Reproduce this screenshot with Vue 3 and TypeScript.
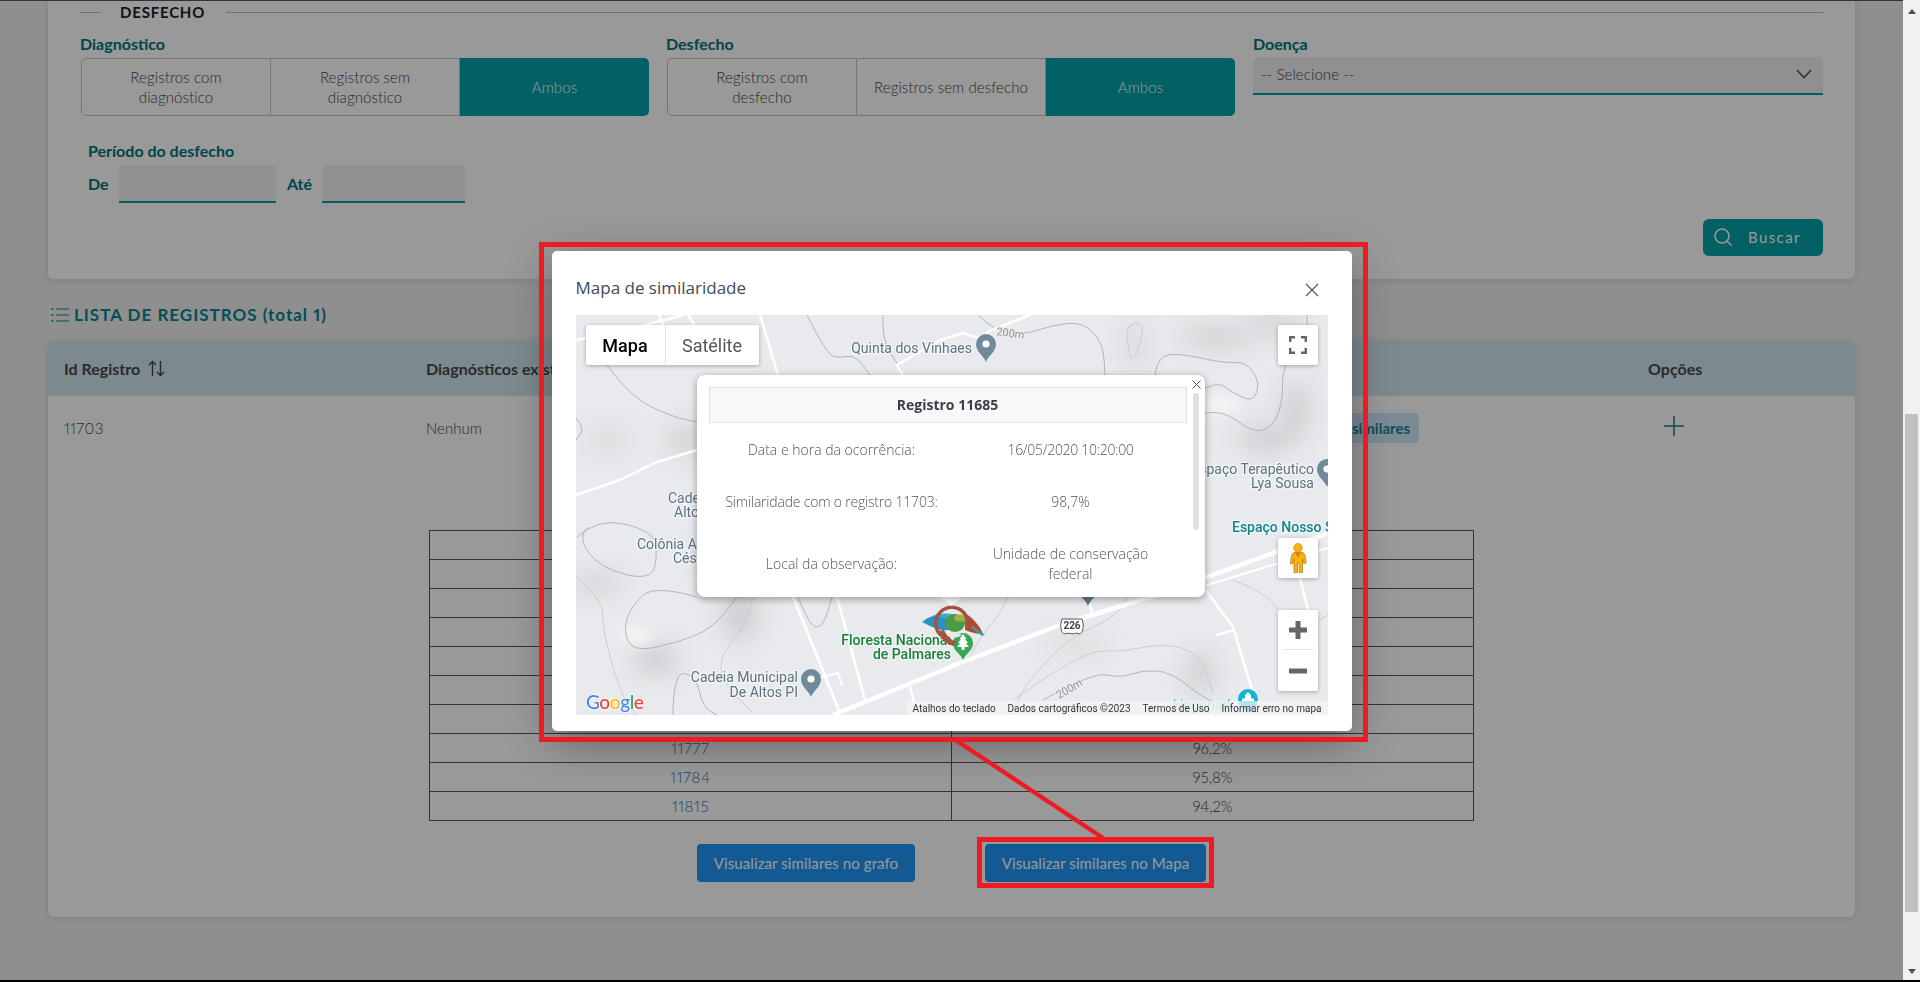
<script setup lang="ts">
type Pt = [number, number]

function smooth(pts: Pt[], closed = false): string {
  const p = closed ? [...pts, pts[0], pts[1]] : pts
  let d = `M${p[0][0]} ${p[0][1]}`
  for (let i = 1; i < p.length - 1; i++) {
    const mx = (p[i][0] + p[i + 1][0]) / 2
    const my = (p[i][1] + p[i + 1][1]) / 2
    d += ` Q${p[i][0]} ${p[i][1]} ${mx} ${my}`
  }
  if (!closed) d += ` L${p[p.length - 1][0]} ${p[p.length - 1][1]}`
  return d
}

const contours: string[] = [
  smooth([[31, 50], [54, 82], [97, 102], [121, 107]]),
  smooth([[0, 103], [9, 113], [0, 125]]),
  smooth([[231, 0], [251, 40], [264, 43], [279, 40], [294, 60]]),
  smooth([[307, 0], [306, 25], [321, 48], [328, 60]]),
  smooth([[402, 0], [417, 15], [447, 20], [477, 10], [507, 7], [527, 28], [529, 60]]),
  smooth([[579, 60], [581, 45], [597, 37], [647, 48], [671, 47], [684, 68], [677, 87], [657, 78], [644, 68], [629, 73]]),
  smooth([[629, 98], [647, 95], [677, 118], [697, 112], [707, 85], [706, 52], [731, 20], [731, 0]]),
  smooth([[1, 222], [22, 203], [74, 215], [82, 235], [76, 266], [24, 253]], true),
  smooth([[121, 282], [79, 270], [56, 290], [47, 315], [57, 337], [101, 328], [137, 313], [161, 282]]),
  smooth([[97, 400], [97, 378], [104, 355], [121, 365], [127, 392], [141, 400]]),
  smooth([[222, 282], [234, 312], [247, 312], [256, 282]]),
  smooth([[467, 385], [517, 357], [544, 363], [567, 355], [594, 357], [621, 378], [637, 387]]),
]
const faintContours: string[] = [
  smooth([[0, 262], [27, 285], [26, 312], [44, 378], [60, 400]]),
  smooth([[177, 282], [171, 308], [141, 345], [151, 372], [177, 398]]),
  smooth([[432, 282], [427, 295], [404, 322], [391, 348]]),
  smooth([[437, 385], [507, 335], [547, 337], [587, 328], [624, 338], [637, 378]]),
  smooth([[657, 265], [694, 280], [704, 302], [735, 310], [752, 300]]),
  smooth([[551, 282], [545, 300], [493, 322], [447, 372], [437, 400]]),
  smooth([[551, 13], [561, 5], [569, 14], [556, 51], [551, 25]], true),
]
const roads: string[] = [
  '0,180 44,165 81,147 121,135',
  '0,25 35,19 107,0',
  '83,0 88,12',
  '112,0 118,9',
  '184,0 202,60',
  '217,282 264,398',
  '261,282 289,385',
  '321,50 364,25 387,18 402,23 416,15 454,0',
  '321,50 327,60',
  '631,277 657,312 677,378',
  '641,320 657,315',
  '724,263 732,295',
  '334,372 341,398',
  '514,290 517,300',
]

const googleLetters = [
  { c: 'G', f: '#4285f4' },
  { c: 'o', f: '#ea4335' },
  { c: 'o', f: '#fbbc05' },
  { c: 'g', f: '#4285f4' },
  { c: 'l', f: '#34a853' },
  { c: 'e', f: '#ea4335' },
]

const similar = [
  ['Id Registro', 'Similaridade'],
  ['11685', '98,7%'],
  ['11692', '98,3%'],
  ['11698', '97,9%'],
  ['11710', '97,6%'],
  ['11726', '97,2%'],
  ['11741', '96,8%'],
  ['11777', '96,2%'],
  ['11784', '95,8%'],
  ['11815', '94,2%'],
]

const infoRows = [
  { k: 'Data e hora da ocorrência:', v: '16/05/2020 10:20:00', cls: 'r1' },
  { k: 'Similaridade com o registro 11703:', v: '98,7%', cls: 'r2' },
  { k: 'Local da observação:', v: 'Unidade de conservação federal', cls: 'r3' },
]
</script>

<template>
  <div class="screen">
    <div class="workspace">
      <div class="page">
        <div class="topline"></div>

        <section class="filter-card">
          <div class="legend"><i></i><span>DESFECHO</span><b></b></div>
          <div class="filter-grid">
            <div>
              <label class="flabel">Diagnóstico</label>
              <div class="segs">
                <button>Registros com diagnóstico</button>
                <button>Registros sem diagnóstico</button>
                <button class="on">Ambos</button>
              </div>
            </div>
            <div>
              <label class="flabel">Desfecho</label>
              <div class="segs">
                <button class="narrow">Registros com desfecho</button>
                <button class="wide">Registros sem desfecho</button>
                <button class="on">Ambos</button>
              </div>
            </div>
            <div class="doenca">
              <label class="flabel">Doença</label>
              <div class="select">
                <span>-- Selecione --</span>
                <svg width="16" height="10" viewBox="0 0 16 10"><path d="M1 1l7 7.5L15 1" fill="none" stroke="#555" stroke-width="1.6" /></svg>
              </div>
            </div>
          </div>
          <div class="period">
            <label class="flabel">Período do desfecho</label>
            <div class="period-row">
              <span class="flabel lb1">De</span>
              <div class="field w1"></div>
              <span class="flabel lb2">Até</span>
              <div class="field w2"></div>
            </div>
          </div>
          <div class="search-row">
            <button class="buscar">
              <svg width="20" height="20" viewBox="0 0 20 20"><circle cx="9" cy="9" r="7" fill="none" stroke="#fff" stroke-width="1.6" /><path d="M14 14l4.5 4.5" stroke="#fff" stroke-width="1.6" /></svg>
              <span>Buscar</span>
            </button>
          </div>
        </section>

        <h2 class="list-title">
          <svg width="18" height="16" viewBox="0 0 18 16">
            <g fill="#008590"><circle cx="1.4" cy="2" r="1.1" /><circle cx="1.4" cy="8" r="1.1" /><circle cx="1.4" cy="14" r="1.1" /></g>
            <path d="M5 2h13M5 8h13M5 14h13" stroke="#008590" stroke-width="1.2" />
          </svg>
          <span>LISTA DE REGISTROS (total 1)</span>
        </h2>

        <section class="list-card">
          <div class="thead">
            <div class="th">
              Id Registro
              <svg class="sort" width="17" height="17" viewBox="0 0 17 17"><path d="M4.500 16V1.500M1 5l3.500-3.500L8 5M12.500 1v14.500M9 12l3.500 3.500L16 12" fill="none" stroke="#474747" stroke-width="1.4" /></svg>
            </div>
            <div class="th">Diagnósticos existentes</div>
            <div class="th"></div>
            <div class="th opt">Opções</div>
          </div>
          <div class="trow">
            <div class="num">11703</div>
            <div>Nenhum</div>
            <div class="pill-cell"><span class="pill">Visualizar similares</span></div>
            <div class="plus-cell">
              <svg width="20" height="20" viewBox="0 0 20 20"><path d="M10 0v20M0 10h20" stroke="#1a7f95" stroke-width="1.6" /></svg>
            </div>
          </div>
          <table class="sim">
            <tbody>
              <tr v-for="(r, i) in similar" :key="i">
                <td><a :class="{ lnk: i > 0 }">{{ r[0] }}</a></td>
                <td>{{ r[1] }}</td>
              </tr>
            </tbody>
          </table>
          <div class="actions">
            <button class="primary a">Visualizar similares no grafo</button>
            <button class="primary b">Visualizar similares no Mapa</button>
          </div>
        </section>

        <div class="backdrop">
          <div class="modal">
            <div class="modal-head">
              <h3>Mapa de similaridade</h3>
              <svg width="14" height="14" viewBox="0 0 14 14"><path d="M1 1l12 12M13 1L1 13" stroke="#555" stroke-width="1.2" /></svg>
            </div>
            <div class="map">
              <svg class="map-canvas" width="752" height="400" viewBox="0 0 752 400">
                <defs>
                  <filter id="blur" x="-80%" y="-80%" width="260%" height="260%"><feGaussianBlur stdDeviation="12" /></filter>
                  <filter id="blur2" x="-50%" y="-50%" width="200%" height="200%"><feGaussianBlur stdDeviation="6" /></filter>
                </defs>
                <rect width="752" height="400" fill="#e9eaed" />
                <g filter="url(#blur)" fill="#c9cbce">
                  <ellipse cx="21" cy="268" rx="24" ry="8" />
                  <ellipse cx="164" cy="300" rx="16" ry="26" />
                  <ellipse cx="80" cy="345" rx="22" ry="14" />
                  <ellipse cx="110" cy="125" rx="18" ry="12" />
                  <ellipse cx="30" cy="125" rx="26" ry="10" opacity=".5" />
                  <ellipse cx="690" cy="124" rx="28" ry="12" />
                  <ellipse cx="720" cy="95" rx="12" ry="28" />
                  <ellipse cx="624" cy="358" rx="12" ry="22" />
                  <ellipse cx="640" cy="22" rx="36" ry="9" />
                  <ellipse cx="700" cy="10" rx="30" ry="8" />
                  <ellipse cx="560" cy="30" rx="10" ry="24" opacity=".6" />
                  <ellipse cx="140" cy="240" rx="10" ry="26" />
                  <ellipse cx="500" cy="330" rx="30" ry="8" opacity=".5" />
                </g>
                <g filter="url(#blur2)" fill="#f2f3f5">
                  <ellipse cx="60" cy="320" rx="18" ry="10" />
                  <ellipse cx="640" cy="90" rx="26" ry="10" />
                </g>
                <path v-for="(d, i) in faintContours" :key="'f' + i" :d="d" class="ctr faint" />
                <path v-for="(d, i) in contours" :key="'c' + i" :d="d" class="ctr" />
                <polyline v-for="(p, i) in roads" :key="'r' + i" :points="p" class="road" />
                <polyline points="246,362 262,358 266,370" class="road thin" />
                <polyline points="257,400 384,348 484,310 587,278 752,218" class="road main" />
                <polyline points="631,270 752,233" class="road thin" />

                <text class="elev" transform="translate(420 20) rotate(8)">200m</text>
                <text class="elev" transform="translate(483 384) rotate(-30)">200m</text>

                <text class="lbl" x="396" y="38" text-anchor="end">Quinta dos Vinhaes</text>
                <text class="lbl" x="92" y="188">Cadeia</text>
                <text class="lbl" x="98" y="202">Altos</text>
                <text class="lbl" x="61" y="234">Colônia Antônio</text>
                <text class="lbl" x="97" y="248">César</text>
                <text class="lbl" x="222" y="367" text-anchor="end">Cadeia Municipal</text>
                <text class="lbl" x="222" y="382" text-anchor="end">De Altos PI</text>
                <text class="lbl" x="738" y="159" text-anchor="end">Espaço Terapêutico</text>
                <text class="lbl" x="738" y="173" text-anchor="end">Lya Sousa</text>
                <text class="lbl teal" x="656" y="217">Espaço Nosso Sonho</text>
                <text class="lbl green" x="375" y="330" text-anchor="end">Floresta Nacional</text>
                <text class="lbl green" x="375" y="344" text-anchor="end">de Palmares</text>
                <text class="lbl pale" x="597" y="395">kingopark</text>

                <g fill="#6f8b99">
                  <path d="M410 47c-2-6-10-10-10-18a10 10 0 0 1 20 0c0 8-8 12-10 18z" />
                  <path d="M235 382c-2-6-10-10-10-18a10 10 0 0 1 20 0c0 8-8 12-10 18z" />
                  <path d="M751 172c-2-6-10-10-10-18a10 10 0 0 1 20 0c0 8-8 12-10 18z" />
                  <path d="M512 291c-2-6-10-10-10-18h20c0 8-8 12-10 18z" fill="#5f7c8a" />
                </g>
                <g fill="#fff"><circle cx="410" cy="29" r="3.600" /><circle cx="235" cy="364" r="3.600" /><circle cx="751" cy="154" r="3.600" /></g>

                <path d="M672 398c-2-3-10-6-10-14a10 10 0 0 1 20 0c0 8-8 11-10 14z" fill="#12b5cb" />
                <path d="M672 377l3 3v3l3 1v2h-12v-2l3-1v-3z" fill="#fff" />

                <path d="M387 345c-2-6-10-9-10-17a10 10 0 0 1 20 0c0 8-8 11-10 17z" fill="#34a853" />
                <path d="M387 319l3.500 5H389l3 4h-2l3 4h-4.500v3h-3v-3H381l3-4h-2l3-4h-1.500z" fill="#fff" />

                <g>
                  <path d="M346 307c8-7 20-9 30-7l4 12c-12 7-22 1-34-5z" fill="#2a93c6" />
                  <path d="M356 301c8-3 16-3 24-1l-4 5c-7-3-13-3-20-4z" fill="#2fb3c2" />
                  <ellipse cx="379" cy="308" rx="10" ry="9" fill="#4c9a45" />
                  <ellipse cx="384" cy="303" rx="6" ry="3.500" fill="#a3b13e" />
                  <path d="M389 298c8 5 15 13 18 21-7 0-13-2-18-4z" fill="#b34a2c" />
                  <path d="M395 312c3 3 7 6 11 9l3-1c-4-2-8-5-12-9z" fill="#2aa7c9" />
                  <path d="M366 321A16 16 0 1 1 391 313" fill="none" stroke="#a5523f" stroke-width="3.500" />
                  <path d="M362 316c3 8 8 13 15 15l4-4c-6-2-10-6-13-12z" fill="#a5523f" />
                  <ellipse cx="378" cy="320" rx="7" ry="2.500" fill="#e8eaed" />
                </g>

                <path d="M486 304h20l1 4c1 5-1 10-3 11-3-1-5-1-7 0-3-1-6-1-9 0-2-1-4-6-3-11z" fill="#fff" stroke="#555" stroke-width="1" />
                <text class="shield" x="496" y="314" text-anchor="middle">226</text>

                <text class="goog" x="10" y="394"><tspan v-for="(l, i) in googleLetters" :key="i" :fill="l.f">{{ l.c }}</tspan></text>
              </svg>

              <div class="types">
                <span class="t on">Mapa</span>
                <span class="t">Satélite</span>
              </div>

              <button class="ctl full">
                <svg width="18" height="18" viewBox="0 0 18 18"><path d="M1.200 6V1.200H6M12 1.200h4.800V6M16.800 12v4.800H12M6 16.800H1.200V12" fill="none" stroke="#666" stroke-width="2.400" /></svg>
              </button>
              <button class="ctl peg">
                <svg width="18" height="30" viewBox="0 0 18 30">
                  <circle cx="9" cy="4.800" r="4.400" fill="#f9b010" stroke="#b98a12" stroke-width=".6" />
                  <path d="M5 9.500h8c1.500 0 2.500 1 3 3l1.200 7.500-2.400.6-1.300-4.600V29.500h-3.400v-9.500H8.400v9.500H5v-13l-1.300 4.600-2.400-.6 1.200-7.500c.5-2 1-3 2.500-3z" fill="#f9b010" stroke="#a87a10" stroke-width=".7" />
                  <path d="M6 9.500l3 5 3-5z" fill="#e2762a" />
                </svg>
              </button>
              <div class="ctl zoom">
                <svg width="18" height="18" viewBox="0 0 18 18"><path d="M0 9h18M9 0v18" stroke="#666" stroke-width="5" /></svg>
                <i></i>
                <svg width="18" height="6" viewBox="0 0 18 6"><path d="M0 3h18" stroke="#666" stroke-width="5" /></svg>
              </div>

              <div class="attrib">
                <span>Atalhos do teclado</span>
                <span>Dados cartográficos ©2023</span>
                <span>Termos de Uso</span>
                <span>Informar erro no mapa</span>
              </div>

              <div class="tail"></div>
              <div class="info">
                <div class="info-head">Registro 11685</div>
                <div v-for="r in infoRows" :key="r.k" class="info-row" :class="r.cls">
                  <div>{{ r.k }}</div>
                  <div class="val">{{ r.v }}</div>
                </div>
                <div class="info-sb"></div>
                <svg class="info-x" width="9" height="9" viewBox="0 0 9 9"><path d="M.5.500l8 8M8.500.500l-8 8" stroke="#555" stroke-width="1" /></svg>
              </div>
            </div>
          </div>
        </div>

        <div class="mark box-modal"></div>
        <div class="mark box-btn"></div>
        <svg class="mark-line" width="160" height="100" viewBox="950 740 160 100"><line x1="957" y1="741" x2="1103" y2="838" stroke="#ed1c24" stroke-width="4.500" /></svg>
      </div>

      <aside class="scrollbar">
        <span class="arrow up"></span>
        <span class="thumb"></span>
        <span class="arrow down"></span>
      </aside>
    </div>
    <div class="floor"></div>
  </div>
</template>

<style>
html, body { margin: 0; padding: 0; background: #000; overflow: hidden; }
</style>

<style scoped>
.screen { width: 1920px; height: 982px; display: flex; flex-direction: column; overflow: hidden; font-family: Lato, "Open Sans", sans-serif; font-variant-numeric: proportional-nums; }
.workspace { flex: 1; display: flex; min-height: 0; }
.floor { height: 2px; background: #000; }
.page { width: 1903px; position: relative; background: #eee; overflow: hidden; padding: 0 48px; box-sizing: border-box; }
.topline { height: 1px; margin: 0 -48px; background: #4e5a70; }

.filter-card { background: #fff; border-radius: 0 0 6px 6px; height: 278px; box-sizing: border-box; padding: 0 32px; box-shadow: 0 1px 6px rgba(0, 0, 0, .12); }
.legend { height: 22px; display: flex; align-items: center; }
.legend i { width: 20px; height: 1px; background: #bbb; }
.legend span { margin: 0 21px 0 20px; font-size: 15px; font-weight: 700; letter-spacing: .8px; color: #1d1d1d; line-height: 22px; }
.legend b { flex: 1; height: 1px; background: #bbb; }

.filter-grid { display: grid; grid-template-columns: 569px 569px 571px; column-gap: 17px; margin-top: 11px; }
.doenca { margin-left: 1px; }
.flabel { display: block; font-size: 16px; font-weight: 700; line-height: 20px; color: #00737c; }
.filter-grid .flabel { margin-bottom: 4px; }
.segs { display: grid; grid-template-columns: 190px 189px 189px; height: 58px; margin-left: 1px; }
.segs button { font: 300 15px/20px Lato, sans-serif; letter-spacing: .1px; color: #444; background: #fff; border: 1px solid #c4c4c4; border-left: 0; padding: 0 30px; }
.segs button:first-child { border-left: 1px solid #c4c4c4; border-radius: 5px 0 0 5px; }
.segs button.wide { padding: 0 6px; }
.segs button.on { background: #00a0a5; color: #fff; border: 0; border-radius: 0 5px 5px 0; }
.select { height: 38px; margin-top: -1px; box-sizing: border-box; background: #f1f1f1; border-bottom: 2px solid #00a0a5; border-radius: 5px 5px 0 0; display: flex; align-items: center; justify-content: space-between; padding: 0 11px 2px 8px; font-size: 15px; font-weight: 300; letter-spacing: .1px; color: #444; }

.period { padding: 25px 0 0 8px; }
.period-row { display: flex; align-items: center; margin-top: 4px; }
.field { height: 38px; box-sizing: border-box; background: #f1f1f1; border-bottom: 2px solid #00a0a5; border-radius: 5px 5px 0 0; }
.lb1 { width: 31px; }
.lb2 { width: 35px; }
.w1 { width: 157px; margin-right: 11px; }
.w2 { width: 143px; }

.search-row { display: flex; justify-content: flex-end; margin-top: 16px; }
.buscar { width: 120px; height: 37px; border: 0; border-radius: 6px; background: #00a0a5; color: #fff; display: flex; align-items: center; gap: 15px; padding: 0 0 2px 10px; font: 400 15px Lato, sans-serif; letter-spacing: 1.4px; }

.list-title { margin: 25px 0 15px 3px; height: 22px; display: flex; align-items: center; gap: 5px; font-size: 17px; line-height: 22px; font-weight: 700; letter-spacing: 1px; color: #008590; }

.list-card { background: #fff; border-radius: 6px; height: 576px; box-shadow: 0 1px 6px rgba(0, 0, 0, .12); overflow: hidden; }
.thead, .trow { display: grid; grid-template-columns: 378px 800px 193px 1fr; }
.thead { height: 55px; background: #cfe6f0; align-items: center; }
.th { font-size: 16px; font-weight: 700; color: #474747; display: flex; align-items: center; gap: 8px; }
.th:first-child, .trow > div:first-child { padding-left: 16px; }
.th.opt { padding-left: 229px; }
.trow { height: 62px; padding-top: 17px; box-sizing: border-box; font-size: 15px; font-weight: 300; color: #444; line-height: 30px; }
.num { letter-spacing: .5px; }
.pill-cell { display: flex; justify-content: flex-end; }
.pill { height: 30px; padding: 0 9px 0 14px; border-radius: 4px; background: #cde8fa; color: #1a7f95; font-weight: 700; white-space: nowrap; font-size: 15px; }
.plus-cell { padding: 3px 0 0 245px; display: flex; align-items: flex-start; }

.sim { width: 1045px; margin: 72px auto 0; border-collapse: collapse; table-layout: fixed; }
.sim td { height: 28px; padding: 0; border: 1px solid #555; text-align: center; font-size: 15px; font-weight: 300; color: #444; line-height: 20px; }
.sim a.lnk { color: #1f6fb8; letter-spacing: .7px; }

.actions { display: flex; justify-content: center; gap: 70px; margin-top: 23px; }
.primary { height: 38px; border: 0; border-radius: 4px; background: #2096f6; color: #fff; font: 400 15px Lato, sans-serif; letter-spacing: .1px; padding: 0; }
.primary.a { width: 218px; }
.primary.b { width: 221px; }

.backdrop { position: absolute; left: 0; top: 0; right: 0; bottom: 0; background: rgba(0, 0, 0, .4); display: flex; align-items: flex-start; justify-content: center; padding-top: 251px; box-sizing: border-box; }
.modal { width: 800px; height: 480px; background: #fff; border-radius: 5px; box-shadow: 0 12px 44px rgba(0, 0, 0, .35); padding: 0 24px; box-sizing: border-box; }
.modal-head { height: 64px; display: flex; align-items: center; justify-content: space-between; padding: 10px 9px 0 0; box-sizing: border-box; }
.modal-head h3 { margin: -2px 0 0; font: 500 17px "Open Sans", sans-serif; color: #3f4a56; }
.modal-head svg { margin-top: 4px; }

.map { position: relative; width: 752px; height: 400px; overflow: hidden; font-family: Roboto, sans-serif; }
.map-canvas { display: block; }
.ctr { fill: none; stroke: #a5a7aa; stroke-width: .8; }
.ctr.faint { stroke: #c4c6c9; }
.road { fill: none; stroke: #fff; stroke-width: 2.500; stroke-linejoin: round; stroke-linecap: round; }
.road.main { stroke-width: 4.500; stroke-linecap: butt; }
.road.thin { stroke-width: 2; }
.elev { font: 11px Roboto, sans-serif; fill: #8f9295; paint-order: stroke; stroke: #eceef0; stroke-width: 2px; }
.lbl { font: 400 14px Roboto, sans-serif; fill: #5c7381; paint-order: stroke; stroke: #f4f5f7; stroke-width: 2.500px; }
.lbl.teal { fill: #12848f; font-weight: 500; }
.lbl.green { fill: #188038; font-weight: 500; }
.lbl.pale { fill: #5ec3d4; stroke-width: 0; }
.shield { font: 700 10px Roboto, sans-serif; fill: #444; }
.goog { font: 500 19px Lato, Roboto, sans-serif; letter-spacing: -.4px; paint-order: stroke; stroke: #fff; stroke-width: 1.200px; }

.types { position: absolute; left: 10px; top: 10px; height: 40px; display: flex; background: #fff; border-radius: 2px; box-shadow: 0 1px 4px rgba(0, 0, 0, .3); font-size: 18px; }
.t { display: flex; align-items: center; justify-content: center; width: 93px; color: #565656; border-left: 1px solid #e6e6e6; }
.t.on { width: 79px; color: #000; font-weight: 500; border-left: 0; }

.ctl { position: absolute; left: 702px; width: 40px; background: #fff; border: 0; padding: 0; border-radius: 2px; box-shadow: 0 1px 4px rgba(0, 0, 0, .3); display: flex; flex-direction: column; align-items: center; justify-content: center; }
.full { top: 10px; height: 40px; }
.peg { top: 223px; height: 40px; }
.zoom { top: 295px; height: 81px; justify-content: flex-start; padding-top: 11px; box-sizing: border-box; }
.zoom i { display: block; flex: none; width: 30px; height: 1px; background: #e6e6e6; margin: 10px 0 18px; }

.attrib { position: absolute; right: 0; bottom: 0; height: 14px; left: 331px; display: flex; align-items: center; background: rgba(245, 245, 245, .72); font-size: 10px; color: #333; white-space: nowrap; padding-left: 6px; box-sizing: border-box; }
.attrib span:nth-child(1) { width: 95px; }
.attrib span:nth-child(2) { width: 135px; }
.attrib span:nth-child(3) { width: 79px; }

.tail { position: absolute; left: 364px; top: 282px; width: 0; height: 0; border-left: 11px solid transparent; border-right: 11px solid transparent; border-top: 9px solid #fff; }
.info { position: absolute; left: 121px; top: 60px; width: 508px; height: 222px; background: #fff; border-radius: 8px; box-shadow: 0 2px 7px 1px rgba(0, 0, 0, .3); overflow: hidden; padding: 12px 18px 0 12px; box-sizing: border-box; font: 300 14px "Open Sans", sans-serif; color: #555; }
.info-head { height: 36px; box-sizing: border-box; background: #f7f8fa; border: 1px solid #dee2e6; text-align: center; line-height: 34px; font-weight: 700; color: #3b3f44; }
.info-row { display: grid; grid-template-columns: 246px 232px; align-items: center; text-align: center; line-height: 20px; }
.info-row .val { padding: 0 30px; }
.r1 .val { letter-spacing: -.3px; }
.r2 > div:first-child { letter-spacing: -.2px; }
.r1 { height: 53px; }
.r2 { height: 52px; }
.r3 { height: 72px; }
.info-sb { position: absolute; left: 496px; top: 18px; width: 6px; height: 137px; background: #e0e0e0; border-radius: 3px; }
.info-x { position: absolute; left: 495px; top: 5px; }

.mark { position: absolute; box-sizing: border-box; border: 5px solid #ed1c24; }
.box-modal { left: 539px; top: 242px; width: 829px; height: 500px; }
.box-btn { left: 977px; top: 837px; width: 237px; height: 51px; }
.mark-line { position: absolute; left: 950px; top: 740px; }

.scrollbar { width: 17px; background: #f1f1f1; display: flex; flex-direction: column; align-items: center; }
.arrow { width: 0; height: 0; border-left: 4px solid transparent; border-right: 4px solid transparent; }
.arrow.up { border-bottom: 5px solid #505050; margin-top: 9px; }
.arrow.down { border-top: 5px solid #505050; margin: auto 0 6px; }
.thumb { width: 13px; height: 498px; background: #c1c1c1; margin-top: 400px; }
</style>
